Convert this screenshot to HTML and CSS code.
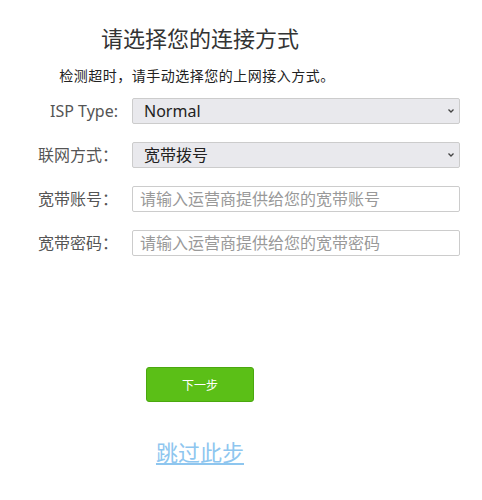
FILE: index.html
```html
<!DOCTYPE html>
<html lang="zh-CN">
<head>
    <meta charset="UTF-8">
    <meta name="viewport" content="width=device-width, initial-scale=1.0">
    <title>连接方式</title>
    <link rel="stylesheet" href="styles.css">
</head>
<body>
    <div class="main">
        <h1 class="title">请选择您的连接方式</h1>
        <p class="tip">检测超时，请手动选择您的上网接入方式。</p>

        <div class="form">
            <div class="row">
                <label class="label">ISP Type:</label>
                <div class="select-box">
                    <select class="field select">
                        <option>Normal</option>
                    </select>
                    <svg class="arrow" width="8" height="6" viewBox="0 0 8 6"><path d="M1.5 1.5 L4 4 L6.5 1.5" fill="none" stroke="#444" stroke-width="1.3"/></svg>
                </div>
            </div>
            <div class="row">
                <label class="label">联网方式：</label>
                <div class="select-box">
                    <select class="field select">
                        <option>宽带拨号</option>
                    </select>
                    <svg class="arrow" width="8" height="6" viewBox="0 0 8 6"><path d="M1.5 1.5 L4 4 L6.5 1.5" fill="none" stroke="#444" stroke-width="1.3"/></svg>
                </div>
            </div>
            <div class="row">
                <label class="label">宽带账号：</label>
                <input type="text" class="field input" placeholder="请输入运营商提供给您的宽带账号">
            </div>
            <div class="row">
                <label class="label">宽带密码：</label>
                <input type="password" class="field input" placeholder="请输入运营商提供给您的宽带密码">
            </div>
        </div>

        <div class="actions">
            <button type="button" class="btn-next">下一步</button>
            <a href="#" class="skip">跳过此步</a>
        </div>
    </div>
</body>
</html>
```

FILE: styles.css
```css
body {margin: 0; background: #fff; font-family: "Noto Sans", "Noto Sans CJK SC", sans-serif; color: #333;}

.main {width: 482px;}

.title {width: 400px; margin: 23px 0 0 0; text-align: center; font-size: 22px; line-height: 30px; font-weight: normal; color: #333;}

.tip {width: 394px; margin: 12px 0 0 0; text-align: center; font-family: "Noto Sans CJK SC", sans-serif; font-size: 14px; letter-spacing: 0.5px; line-height: 20px; color: #222;}

.form {margin-top: 13px; display: flex; flex-direction: column; gap: 18px;}

.row {display: grid; grid-template-columns: 120px 328px; column-gap: 12px; align-items: center;}

.label {text-align: right; font-size: 16px; line-height: 26px; color: #555; padding-right: 2px;}

.select-box {position: relative;}

.field {box-sizing: border-box; width: 328px; height: 26px; margin: 0; border: 1px solid #ccc; border-radius: 2px; font-family: "Noto Sans", "Noto Sans CJK SC", sans-serif; font-size: 16px; outline: none;}

.select {appearance: none; -webkit-appearance: none; background: #e9e9ed; padding: 0 0 0 11px; color: #222;}

.arrow {position: absolute; right: 5px; top: 10px; pointer-events: none;}

.input {background: #fff; padding: 0 7px; color: #333;}

.input::placeholder {color: #999;}

.actions {width: 400px; display: flex; flex-direction: column; align-items: center; margin-top: 111px;}

.btn-next {width: 108px; height: 35px; background: #5bbf17; border: 1px solid #4aa80f; border-radius: 3px; color: #fff; font-size: 12px; font-family: "Noto Sans CJK SC", sans-serif; cursor: pointer;}

.skip {margin-top: 34px; font-size: 22px; line-height: 30px; color: #8ec6ef; text-decoration: underline; font-family: "Noto Sans CJK SC", sans-serif;}
```
